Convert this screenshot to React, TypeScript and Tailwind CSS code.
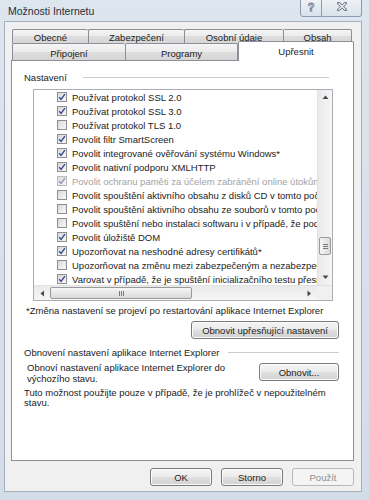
import type { ReactNode } from "react";

type Row = { label: string; checked: boolean; disabled?: boolean };

const rows: Row[] = [
  { label: "Používat protokol SSL 2.0", checked: true },
  { label: "Používat protokol SSL 3.0", checked: true },
  { label: "Používat protokol TLS 1.0", checked: false },
  { label: "Povolit filtr SmartScreen", checked: true },
  { label: "Povolit integrované ověřování systému Windows*", checked: true },
  { label: "Povolit nativní podporu XMLHTTP", checked: true },
  { label: "Povolit ochranu paměti za účelem zabránění online útokům", checked: true, disabled: true },
  { label: "Povolit spouštění aktivního obsahu z disků CD v tomto počítači", checked: false },
  { label: "Povolit spouštění aktivního obsahu ze souborů v tomto počítači", checked: false },
  { label: "Povolit spuštění nebo instalaci softwaru i v případě, že podpis je neplatný", checked: false },
  { label: "Povolit úložiště DOM", checked: true },
  { label: "Upozorňovat na neshodné adresy certifikátů*", checked: true },
  { label: "Upozorňovat na změnu mezi zabezpečeným a nezabezpečeným režimem", checked: false },
  { label: "Varovat v případě, že je spuštění inicializačního testu přesměrováno", checked: true },
];

const CheckBox = ({ checked, disabled }: { checked: boolean; disabled?: boolean }) => (
  <span
    className={`flex h-[10px] w-[10px] shrink-0 items-center justify-center border bg-[linear-gradient(135deg,#d9d9d9,#f8f8f8)] ${
      disabled ? "border-[#bcbcbc]" : "border-[#8f8f8f]"
    }`}
  >
    {checked && (
      <svg width="8" height="8" viewBox="0 0 8 8">
        <path
          d="M1.2 4.2 L3.1 6.4 L6.9 1.1"
          fill="none"
          stroke={disabled ? "#8f9cb8" : "#3b4f8f"}
          strokeWidth="1.5"
        />
      </svg>
    )}
  </span>
);

const WinButton = ({
  children,
  className = "",
  disabled,
}: {
  children: ReactNode;
  className?: string;
  disabled?: boolean;
}) => (
  <div
    className={`flex items-center justify-center rounded-[3px] border ${
      disabled
        ? "border-[#b5b9bc] bg-[#f4f4f4] text-[#8d8d8d]"
        : "border-[#7a7a7a] bg-[linear-gradient(#f4f4f4,#ececec_45%,#dedede_55%,#d2d2d2)] text-[#1e1e1e] shadow-[inset_0_0_0_1px_#fbfbfb]"
    } ${className}`}
  >
    {children}
  </div>
);

// small scroll arrow triangle
const Arrow = ({ dir }: { dir: "up" | "down" | "left" | "right" }) => {
  const d = {
    up: "M0.5 4 L3.5 0.5 L6.5 4 Z",
    down: "M0.5 0.5 L3.5 4 L6.5 0.5 Z",
    left: "M4 0.5 L0.5 3.5 L4 6.5 Z",
    right: "M0.5 0.5 L4 3.5 L0.5 6.5 Z",
  }[dir];
  const vertical = dir === "up" || dir === "down";
  return (
    <svg width={vertical ? 7 : 5} height={vertical ? 5 : 7} viewBox={vertical ? "0 0 7 5" : "0 0 5 7"}>
      <path d={d} fill="#4a4a4a" />
    </svg>
  );
};

const Tab = ({ label, className = "" }: { label: string; className?: string }) => (
  <div
    className={`flex items-start justify-center rounded-t-[2px] border-l border-t border-[#8c8f97] bg-[linear-gradient(#f5f5f5,#ebebeb_50%,#dedede_50%,#d6d6d6)] ${className}`}
  >
    {label}
  </div>
);

export default function App() {
  return (
    <div className="relative flex h-[500px] w-[369px] flex-col overflow-hidden bg-[linear-gradient(#dde5ee,#d3dde8)] text-[9.5px] leading-[11px] text-[#222] [font-family:'Liberation_Sans',Arial,sans-serif]">
      {/* title bar */}
      <div className="flex h-[21px] shrink-0">
        <div className="pl-[8px] pt-[5px] text-[10.5px] leading-[12px] text-[#2a2f36]">Možnosti Internetu</div>
        <div className="ml-auto mr-[7px] flex h-[18px] -mt-[1px]">
          <div className="flex w-[22px] items-start justify-center rounded-bl-[3px] border border-[#8c9bb0] bg-[linear-gradient(#eef2f6,#d9e1ea)] pt-[1px] text-[11px] font-bold leading-[12px] text-[#eef1f4] [-webkit-text-stroke:0.8px_#6f7b8a]">
            ?
          </div>
          <div className="flex w-[40px] items-start justify-center rounded-br-[3px] border border-l-0 border-[#8c9bb0] bg-[linear-gradient(#eef2f6,#d9e1ea)] pt-[2px]">
            <svg width="10" height="9" viewBox="0 0 10 9">
              <path d="M1.5 1.2 L8.5 7.8 M8.5 1.2 L1.5 7.8" stroke="#6f7b8a" strokeWidth="3" strokeLinecap="square" />
              <path d="M1.5 1.2 L8.5 7.8 M8.5 1.2 L1.5 7.8" stroke="#f4f6f8" strokeWidth="1.2" />
            </svg>
          </div>
        </div>
      </div>

      {/* client area */}
      <div className="ml-[4px] flex h-[471px] w-[358px] flex-col border border-[#a6b1bf] bg-[#f0f0f0]">
        <div className="ml-[6px] mt-[7px] w-[343px]">
          {/* tab rows */}
          <div className="flex h-[14px] pl-[1px]">
            <Tab label="Obecné" className="w-[76px] pt-[2px]" />
            <Tab label="Zabezpečení" className="w-[96px] pt-[2px]" />
            <Tab label="Osobní údaje" className="w-[99px] pt-[2px]" />
            <Tab label="Obsah" className="w-[69px] border-r pt-[2px]" />
          </div>
          <div className="flex h-[17px] pl-[1px]">
            <Tab label="Připojení" className="h-[17px] w-[113px] pt-[4px]" />
            <Tab label="Programy" className="h-[17px] w-[113px] border-r pt-[4px]" />
            <div className="relative z-10 -mt-[2px] flex h-[20px] w-[116px] justify-center rounded-t-[2px] border-l border-r border-t border-[#8c8f97] bg-white pt-[4px]">
              Upřesnit
            </div>
          </div>

          {/* tab page */}
          <div className="flex h-[401px] flex-col border border-[#8c8f97] bg-white">
            <div className="mt-[11px] flex h-[11px] items-center pl-[12px]">
              <span>Nastavení</span>
              <span className="ml-[16px] mr-[24px] h-px flex-1 bg-[#c9cdd2]" />
            </div>

            {/* settings list */}
            <div className="ml-[21px] mt-[6px] flex h-[212px] w-[300px] flex-col border border-[#a9aeb5]">
              <div className="flex h-[195px]">
                <div className="flex-1 overflow-hidden">
                  {rows.map((r) => (
                    <div key={r.label} className="flex h-[14px] items-center gap-[5px] whitespace-nowrap pl-[23px]">
                      <CheckBox checked={r.checked} disabled={r.disabled} />
                      <span className={r.disabled ? "text-[#a3a3a3]" : ""}>{r.label}</span>
                    </div>
                  ))}
                </div>
                {/* vertical scrollbar */}
                <div className="flex w-[15px] flex-col border-l border-[#e3e3e3] bg-[linear-gradient(90deg,#e9e9e9,#f6f6f6)]">
                  <div className="flex h-[15px] items-center justify-center">
                    <Arrow dir="up" />
                  </div>
                  <div className="flex-1 pl-[1px] pr-[1px] pt-[132px]">
                    <div className="flex h-[18px] flex-col items-center justify-center gap-[1px] rounded-[2px] border border-[#9a9a9a] bg-[linear-gradient(90deg,#f6f6f6,#dadada)]">
                      <span className="h-px w-[5px] bg-[#7a7a7a]" />
                      <span className="h-px w-[5px] bg-[#7a7a7a]" />
                      <span className="h-px w-[5px] bg-[#7a7a7a]" />
                    </div>
                  </div>
                  <div className="flex h-[15px] items-center justify-center">
                    <Arrow dir="down" />
                  </div>
                </div>
              </div>
              {/* horizontal scrollbar */}
              <div className="flex h-[15px] border-t border-[#e3e3e3] bg-[linear-gradient(#e9e9e9,#f6f6f6)]">
                <div className="flex w-[16px] items-center justify-center">
                  <Arrow dir="left" />
                </div>
                <div className="flex-1 pb-[1px] pt-[1px]">
                  <div className="flex h-full w-[142px] items-center justify-center gap-[1px] rounded-[2px] border border-[#9a9a9a] bg-[linear-gradient(#f6f6f6,#dadada)]">
                    <span className="h-[5px] w-px bg-[#7a7a7a]" />
                    <span className="h-[5px] w-px bg-[#7a7a7a]" />
                    <span className="h-[5px] w-px bg-[#7a7a7a]" />
                  </div>
                </div>
                <div className="flex w-[15px] items-center justify-center">
                  <Arrow dir="right" />
                </div>
                <div className="w-[15px] bg-[#f0f0f0]" />
              </div>
            </div>

            <div className="mt-[4px] pl-[14px]">*Změna nastavení se projeví po restartování aplikace Internet Explorer</div>

            <WinButton className="mr-[14px] mt-[5px] h-[18px] w-[148px] self-end">Obnovit upřesňující nastavení</WinButton>

            <div className="mt-[8px] flex h-[11px] items-center pl-[12px]">
              <span>Obnovení nastavení aplikace Internet Explorer</span>
              <span className="ml-[9px] mr-[14px] h-px flex-1 bg-[#c9cdd2]" />
            </div>

            <div className="mt-[4px] flex h-[22px] items-start">
              <div className="pl-[15px]">
                Obnoví nastavení aplikace Internet Explorer do
                <br />
                výchozího stavu.
              </div>
              <WinButton className="ml-auto mr-[14px] mt-[1px] h-[18px] w-[80px]">Obnovit...</WinButton>
            </div>

            <div className="mt-[4px] pl-[12px] leading-[10px]">
              Tuto možnost použijte pouze v případě, že je prohlížeč v nepoužitelném
              <br />
              stavu.
            </div>
          </div>
        </div>

        {/* dialog buttons */}
        <div className="mt-[7px] flex justify-end gap-[9px] pr-[7px]">
          <WinButton className="h-[18px] w-[62px]">OK</WinButton>
          <WinButton className="h-[18px] w-[62px]">Storno</WinButton>
          <WinButton disabled className="h-[18px] w-[62px]">
            Použít
          </WinButton>
        </div>
      </div>
    </div>
  );
}
